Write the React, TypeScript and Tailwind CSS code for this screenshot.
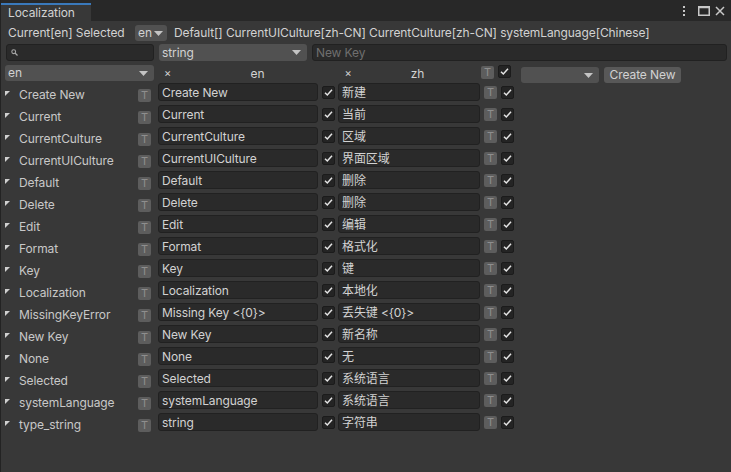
import React from "react";

const rows: [string, string, string][] = [
  ["Create New", "Create New", "新建"],
  ["Current", "Current", "当前"],
  ["CurrentCulture", "CurrentCulture", "区域"],
  ["CurrentUICulture", "CurrentUICulture", "界面区域"],
  ["Default", "Default", "删除"],
  ["Delete", "Delete", "删除"],
  ["Edit", "Edit", "编辑"],
  ["Format", "Format", "格式化"],
  ["Key", "Key", "键"],
  ["Localization", "Localization", "本地化"],
  ["MissingKeyError", "Missing Key <{0}>", "丢失键 <{0}>"],
  ["New Key", "New Key", "新名称"],
  ["None", "None", "无"],
  ["Selected", "Selected", "系统语言"],
  ["systemLanguage", "systemLanguage", "系统语言"],
  ["type_string", "string", "字符串"],
];

function Arrow() {
  return (
    <svg width="9" height="5" viewBox="0 0 9 5" className="shrink-0">
      <polygon points="0,0 9,0 4.5,5" fill="#c4c4c4" />
    </svg>
  );
}

function Check() {
  return (
    <div className="w-[13px] h-[13px] shrink-0 rounded-[2px] bg-[#242424] border border-[#1b1b1b] flex items-center justify-center">
      <svg width="11" height="11" viewBox="0 0 11 11">
        <path d="M2 5.8 L4.3 8 L9 2.8" stroke="#e4e4e4" strokeWidth="1.5" fill="none" />
      </svg>
    </div>
  );
}

function TBtn() {
  return (
    <div className="w-[13px] h-[13px] shrink-0 rounded-[2px] bg-[#5d5d5d] text-[#8e8e8e] text-[11px] leading-[13px] text-center">
      T
    </div>
  );
}

function Field({ text, w }: { text: string; w: string }) {
  return (
    <div
      className={`${w} h-[18px] shrink-0 rounded-[3px] bg-[#2a2a2a] border border-[#212121] pl-[3px] leading-[17px] text-[#d2d2d2] whitespace-nowrap overflow-hidden`}
    >
      {text}
    </div>
  );
}

export default function App() {
  return (
    <div className="w-[731px] h-[472px] bg-[#383838] flex flex-col overflow-hidden text-[12px] tracking-[-0.1px] text-[#d2d2d2] font-['Inter','Noto_Sans_CJK_SC',sans-serif] border-l border-[#232323]">
      {/* tab bar */}
      <div className="h-[21px] shrink-0 bg-[#282828] flex relative">
        <div className="self-end w-[90px] h-[18px] bg-[#383838] border-t-2 border-[#3a79bb] pl-[7px] leading-[15px] text-[12px] text-[#d2d2d2]">
          Localization
        </div>
        <div className="ml-auto mr-[6px] flex items-center gap-[5px] pt-[1px]">
          <svg width="4" height="10" viewBox="0 0 4 10">
            <rect x="1" y="0" width="2" height="2" fill="#c8c8c8" />
            <rect x="1" y="4" width="2" height="2" fill="#c8c8c8" />
            <rect x="1" y="8" width="2" height="2" fill="#c8c8c8" />
          </svg>
          <svg width="12" height="10" viewBox="0 0 12 10" className="ml-[7px]">
            <rect x="0.75" y="0.75" width="10.5" height="8.5" stroke="#c8c8c8" strokeWidth="1.5" fill="none" />
            <rect x="0.75" y="0.75" width="10.5" height="1.5" fill="#c8c8c8" />
          </svg>
          <svg width="10" height="10" viewBox="0 0 10 10">
            <path d="M1 1 L9 9 M9 1 L1 9" stroke="#c8c8c8" strokeWidth="1.5" />
          </svg>
        </div>
      </div>

      <div className="flex flex-col px-[4px]">
        {/* row A */}
        <div className="h-[22px] mt-[1px] flex items-center">
          <div className="w-[130px] pl-[3px] whitespace-nowrap">Current[en] Selected</div>
          <div className="w-[32px] h-[16px] rounded-[3px] bg-[#515151] flex items-center pl-[3px] gap-[2px]">
            <span className="leading-[16px]">en</span>
            <Arrow />
          </div>
          <div className="ml-[7px] whitespace-nowrap">
            Default[] CurrentUICulture[zh-CN] CurrentCulture[zh-CN] systemLanguage[Chinese]
          </div>
        </div>

        {/* row B */}
        <div className="h-[17px] flex">
          <div className="ml-[1px] w-[148px] h-[17px] rounded-[3px] bg-[#2a2a2a] border border-[#212121] flex items-center pl-[4px]">
            <svg width="7" height="7" viewBox="0 0 7 7">
              <circle cx="2.7" cy="2.7" r="1.9" stroke="#a8a8a8" strokeWidth="1.1" fill="none" />
              <path d="M4 4 L6.5 6.5" stroke="#a8a8a8" strokeWidth="1.3" />
            </svg>
          </div>
          <div className="ml-[5px] w-[148px] h-[17px] rounded-[3px] bg-[#515151] flex items-center pl-[3px] pr-[6px]">
            <span className="flex-1 leading-[17px]">string</span>
            <Arrow />
          </div>
          <div className="ml-[5px] flex-1 h-[17px] rounded-[3px] bg-[#2a2a2a] border border-[#212121] pl-[3px] leading-[15px] text-[#6f6f6f]">
            New Key
          </div>
        </div>

        {/* row C */}
        <div className="h-[17px] mt-[4px] flex items-start">
          <div className="w-[149px] h-[16px] rounded-[3px] bg-[#515151] flex items-center pl-[3px] pr-[6px]">
            <span className="flex-1 leading-[16px]">en</span>
            <Arrow />
          </div>
          <div className="ml-[4px] w-[180px] h-[17px] flex items-center">
            <span className="w-[19px] text-center text-[11px]">×</span>
            <span className="flex-1 text-center">en</span>
          </div>
          <div className="w-[139px] h-[17px] flex items-center">
            <span className="w-[20px] text-center text-[11px]">×</span>
            <span className="flex-1 text-center">zh</span>
          </div>
          <div className="ml-[4px] mt-[1px]">
            <TBtn />
          </div>
          <div className="ml-[4px] mt-[0px]">
            <Check />
          </div>
          <div className="ml-[10px] mt-[2px] w-[78px] h-[16px] rounded-[3px] bg-[#515151] flex items-center justify-end pr-[6px]">
            <Arrow />
          </div>
          <div className="ml-[5px] mt-[2px] w-[77px] h-[16px] rounded-[3px] bg-[#585858] text-center leading-[16px] text-[#d2d2d2]">
            Create New
          </div>
        </div>

        {/* data rows */}
        <div className="mt-[1px] flex flex-col">
          {rows.map(([k, en, zh], i) => (
            <div key={i} className="h-[22px] flex items-start">
              <div className="w-[14px] pt-[8px]">
                <svg width="5" height="5" viewBox="0 0 5 5">
                  <polygon points="0,0 5,0 0,5" fill="#d0d0d0" />
                </svg>
              </div>
              <div className="w-[119px] mt-[4px] leading-[16px] text-[#c8c8c8] whitespace-nowrap">{k}</div>
              <div className="mt-[6px]">
                <TBtn />
              </div>
              <div className="ml-[7px]">
                <Field text={en} w="w-[160px]" />
              </div>
              <div className="ml-[4px] mt-[3px]">
                <Check />
              </div>
              <div className="ml-[3px]">
                <Field text={zh} w="w-[142px]" />
              </div>
              <div className="ml-[4px] mt-[3px]">
                <TBtn />
              </div>
              <div className="ml-[4px] mt-[3px]">
                <Check />
              </div>
            </div>
          ))}
        </div>
      </div>
    </div>
  );
}
